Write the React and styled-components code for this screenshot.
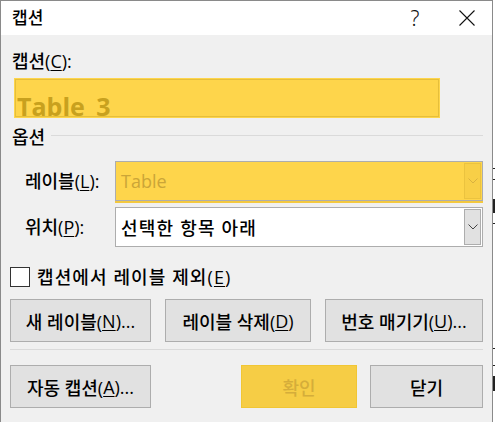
import React from 'react';
import styled, { createGlobalStyle } from 'styled-components';

const FONT = `"Segoe UI", "Open Sans", "Noto Sans CJK KR", sans-serif`;

const Global = createGlobalStyle`
  html, body { margin: 0; padding: 0; background: #ffffff; }
  body { width: 495px; height: 422px; overflow: hidden; }
  #root { width: 495px; height: 422px; }
`;

const Page = styled.div`
  display: flex;
  width: 495px;
  height: 422px;
  overflow: hidden;
  font-family: ${FONT};
  font-weight: 500;
  color: #000;
`;

const Dialog = styled.div`
  flex: none;
  width: 493px;
  height: 440px;
  box-sizing: border-box;
  border: 1px solid #8a8a8a;
  border-bottom: none;
  background: #f0f0f0;
  display: flex;
  flex-direction: column;
`;

const TitleBar = styled.div`
  height: 34px;
  flex: none;
  background: #ffffff;
  display: flex;
  align-items: center;
  padding-left: 11px;
`;

const TitleText = styled.div`
  font-size: 17px;
  line-height: 20px;
  flex: 1;
`;

const CaptionButton = styled.div`
  width: 46px;
  height: 34px;
  display: flex;
  align-items: center;
  justify-content: center;
  margin-right: ${(p) => p.$mr || 0}px;
  font-family: "Noto Sans", sans-serif;
  font-weight: 300;
  font-size: 21px;
  color: #111;
`;

const Body = styled.div`
  display: flex;
  flex-direction: column;
  padding: 0 9px;
`;

const Label = styled.div`
  font-size: ${(p) => p.$size || 18}px;
  line-height: 24px;
  height: 24px;
  white-space: nowrap;
  u { text-underline-offset: 2px; }
`;

const CaptionLabel = styled(Label)`
  margin-top: 14px;
  margin-left: 2px;
`;

const CaptionInput = styled.div`
  margin-top: 5px;
  margin-left: 4px;
  width: 426px;
  height: 40px;
  box-sizing: border-box;
  background: #fed54b;
  box-shadow: inset 0 0 0 1px #fed54b, inset 0 0 0 2px #e6bf3b;
  padding: 16px 0 0 3px;
`;

const CaptionValue = styled.div`
  font-family: "Open Sans", "Noto Sans", sans-serif;
  font-weight: 700;
  font-size: 25px;
  line-height: 24px;
  height: 24px;
  color: #c8a11e;
  word-spacing: 5px;
  white-space: nowrap;
`;

const GroupHeader = styled.div`
  margin-top: 7px;
  margin-left: 2px;
  display: flex;
  align-items: center;
  height: 24px;
`;

const GroupLine = styled.div`
  flex: 1;
  height: 1px;
  background: #dadada;
  margin-left: 6px;
  margin-bottom: 3px;
`;

const FieldRow = styled.div`
  display: flex;
  align-items: center;
  margin-top: ${(p) => p.$mt}px;
  padding-left: 15px;
`;

const FieldLabel = styled(Label)`
  width: 90px;
  flex: none;
`;

const Combo = styled.div`
  width: 368px;
  height: 40px;
  box-sizing: border-box;
  border: 1px solid #adadad;
  background: ${(p) => (p.$hl ? '#fed54b' : '#ffffff')};
  display: flex;
  align-items: center;
  padding: 1px 1px 1px 5px;
  ${(p) => p.$hl && 'box-shadow: 0 2px 0 0 #f3c83e;'}
`;

const ComboText = styled.div`
  flex: 1;
  font-size: 18px;
  letter-spacing: ${(p) => (p.$hl ? 0 : 1.2)}px;
  color: ${(p) => (p.$hl ? '#cba538' : '#000')};
  white-space: nowrap;
`;

const DropButton = styled.div`
  width: 17px;
  height: 36px;
  box-sizing: border-box;
  border: 1px solid ${(p) => (p.$hl ? '#ebc33f' : '#adadad')};
  background: ${(p) => (p.$hl ? '#f8cf47' : '#e1e1e1')};
  display: flex;
  align-items: center;
  justify-content: center;
`;

const CheckRow = styled.div`
  display: flex;
  align-items: center;
  margin-top: 18px;
  height: 24px;
`;

const CheckBox = styled.div`
  width: 20px;
  height: 20px;
  box-sizing: border-box;
  border: 1px solid #333;
  background: #fff;
  flex: none;
`;

const CheckText = styled(Label)`
  margin-left: 7px;
  letter-spacing: 1.1px;
`;

const ButtonRow = styled.div`
  display: flex;
  justify-content: space-between;
  margin-top: ${(p) => p.$mt}px;
`;

const Button = styled.div`
  width: ${(p) => p.$w}px;
  height: 43px;
  box-sizing: border-box;
  border: 1px solid ${(p) => (p.$hl ? '#f1c634' : '#adadad')};
  background: ${(p) => (p.$hl ? '#f6cd45' : '#e1e1e1')};
  color: ${(p) => (p.$hl ? '#d5ad3a' : '#000')};
  display: flex;
  align-items: center;
  justify-content: center;
  font-size: 18px;
  white-space: nowrap;
  margin-left: ${(p) => (p.$auto ? 'auto' : p.$ml ? p.$ml + 'px' : '0')};
  u { text-underline-offset: 2px; }
`;

const Separator = styled.div`
  height: 1px;
  background: #dadada;
  margin-top: 7px;
`;

const Backdrop = styled.div`
  flex: none;
  width: 2px;
  display: flex;
  flex-direction: column;
`;

const Mark = styled.div`
  height: ${(p) => p.$h}px;
  margin-top: ${(p) => p.$mt}px;
  background: #222;
`;

const Chevron = ({ color }) => (
  <svg width="10" height="6" viewBox="0 0 10 6">
    <path d="M0.5 0.5 L5 5 L9.5 0.5" fill="none" stroke={color} strokeWidth="1" />
  </svg>
);

const CloseIcon = () => (
  <svg width="16" height="16" viewBox="0 0 16 16">
    <path d="M0.5 0.5 L15.5 15.5 M15.5 0.5 L0.5 15.5" stroke="#111" strokeWidth="1.1" fill="none" />
  </svg>
);

export default function App() {
  return (
    <Page>
      <Global />
      <Dialog>
        <TitleBar>
          <TitleText>캡션</TitleText>
          <CaptionButton $mr={6}>?</CaptionButton>
          <CaptionButton $mr={2}><CloseIcon /></CaptionButton>
        </TitleBar>
        <Body>
          <CaptionLabel>캡션(<u>C</u>):</CaptionLabel>
          <CaptionInput>
            <CaptionValue>Table 3</CaptionValue>
          </CaptionInput>
          <GroupHeader>
            <Label>옵션</Label>
            <GroupLine />
          </GroupHeader>
          <FieldRow $mt={12}>
            <FieldLabel>레이블(<u>L</u>):</FieldLabel>
            <Combo $hl>
              <ComboText $hl>Table</ComboText>
              <DropButton $hl><Chevron color="#d8b140" /></DropButton>
            </Combo>
          </FieldRow>
          <FieldRow $mt={6}>
            <FieldLabel>위치(<u>P</u>):</FieldLabel>
            <Combo>
              <ComboText>선택한 항목 아래</ComboText>
              <DropButton><Chevron color="#444" /></DropButton>
            </Combo>
          </FieldRow>
          <CheckRow>
            <CheckBox />
            <CheckText>캡션에서 레이블 제외(<u>E</u>)</CheckText>
          </CheckRow>
          <ButtonRow $mt={10}>
            <Button $w={141}>새 레이블(<u>N</u>)...</Button>
            <Button $w={146}>레이블 삭제(<u>D</u>)</Button>
            <Button $w={158}>번호 매기기(<u>U</u>)...</Button>
          </ButtonRow>
          <Separator />
          <ButtonRow $mt={15}>
            <Button $w={141}>자동 캡션(<u>A</u>)...</Button>
            <Button $w={116} $hl $auto>확인</Button>
            <Button $w={113} $ml={13}>닫기</Button>
          </ButtonRow>
        </Body>
      </Dialog>
      <Backdrop>
        <Mark $mt={168} $h={1} />
        <Mark $mt={10} $h={1} />
        <Mark $mt={19} $h={14} />
        <Mark $mt={10} $h={1} />
        <Mark $mt={124} $h={1} />
        <Mark $mt={16} $h={1} />
        <Mark $mt={10} $h={15} />
      </Backdrop>
    </Page>
  );
}
